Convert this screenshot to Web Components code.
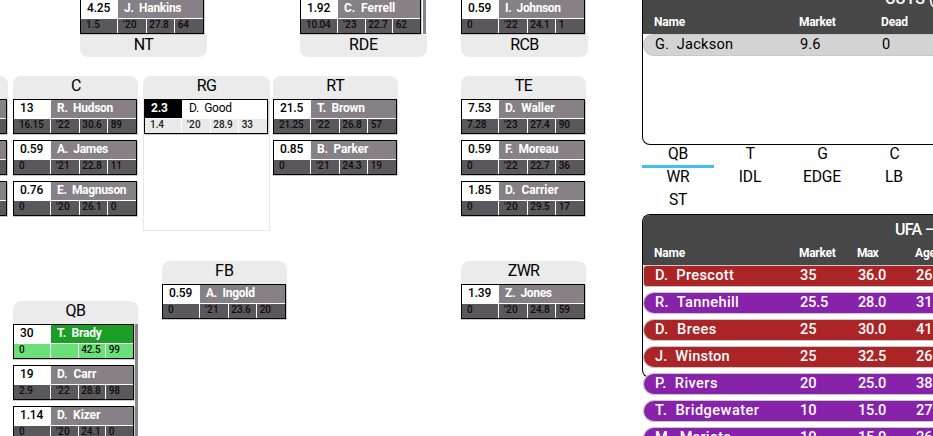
<!DOCTYPE html>
<html lang="en">
<head>
<meta charset="utf-8">
<title>Depth chart</title>
<style>
  html, body { margin: 0; height: 436px; overflow: hidden; background: #fff; }
  body { font-family: Roboto, "Liberation Sans", sans-serif; color: #000; }
</style>
</head>
<body>
<depth-app></depth-app>
<script>
const attach = (host, css, html) => {
  const root = host.attachShadow({ mode: 'open' });
  root.innerHTML = `<style>${css}</style>${html}`;
  return root;
};

// A run of text tracked so that it takes a given width in pixels.
class FitText extends HTMLElement {
  connectedCallback() {
    if (this.shadowRoot) return;
    attach(this, `:host{display:inline-block;white-space:pre}span{display:inline-block}`, `<span><slot></slot></span>`);
    this.fit();
  }
  fit() {
    const text = this.textContent;
    const size = parseFloat(getComputedStyle(this).fontSize);
    let target = parseFloat(this.getAttribute('w'));
    if (!target) {
      const digits = (text.match(/\d/g) || []).length;
      target = digits * size * 0.53 + (text.length - digits) * size * 0.26;
    }
    const natural = this.shadowRoot.querySelector('span').getBoundingClientRect().width;
    if (natural) this.style.letterSpacing = ((target + size * 0.08 - natural) / text.length).toFixed(3) + 'px';
  }
}

const fitted = (text, w = '') => text ? `<fit-text w="${w}">${text}</fit-text>` : '';

class PlayerCard extends HTMLElement {
  connectedCallback() {
    const [value, name, w, cost, year, age, rating] = this.getAttribute('data').split('|');
    attach(this, `
      :host{display:block;box-sizing:border-box;height:35px;border:1px solid #000;background:#fff;box-shadow:0 1px #c9c9c9,1px 1px #d0d0d0;--top:#878187;--low:#5a585c;--ink:#fff;--lowink:#0c0c0c}
      :host([tone=green]){--top:#1a9e26;--low:#6bdf78}
      :host([tone=plain]){--top:#fff;--low:#e9e9e9;--ink:#000;--lowink:#222}
      .top{display:grid;grid-template-columns:37px 1fr;height:18px;line-height:16px;font-size:12px;font-weight:500}
      .top>*{height:18px}
      .v{padding-left:6px;background:#fff}
      :host([tone=plain]) .v{background:#000;color:#fff;font-weight:700}
      .n{padding-left:6px;background:var(--top);color:var(--ink);font-weight:700}
      :host([tone=plain]) .n{font-weight:400;padding-left:7px}
      .low{display:grid;grid-template-columns:36px 28fr 27.5fr 28fr;column-gap:1px;margin-top:1px;height:14px;line-height:12px;font-size:10px;font-weight:500;color:var(--lowink)}
      .low div{background:var(--low);padding-left:2.5px}
      .low div:nth-child(1){padding-left:5px}
      .low div:nth-child(2){padding-left:5px}`,
      `<div class="top"><div class="v">${fitted(value)}</div><div class="n">${fitted(name, w)}</div></div>
       <div class="low">${[cost, year, age, rating].map(t => `<div>${fitted(t)}</div>`).join('')}</div>`);
  }
}

class PositionGroup extends HTMLElement {
  connectedCallback() {
    const label = this.getAttribute('label');
    attach(this, `
      :host{display:flex;flex-direction:column;width:125px;flex:none}
      header{height:23px;line-height:20px;font-size:16px;text-align:center;background:#ebebeb;border-radius:8px 8px 0 0;flex:none}
      .cards{display:flex;flex-direction:column;gap:6px;padding-right:1px}
      :host([foot]){flex-direction:column-reverse;justify-content:flex-end;width:127px}
      :host([foot]) header{height:22px;margin-top:1px;border-radius:0 0 8px 8px}
      :host([foot]) .cards{padding-right:3px}
      :host([scroll]) .cards{padding-right:1px;border-right:3px solid #858585}
      :host([foot][scroll]) .cards{padding-right:2px;margin-right:1px}
      :host([open]){width:127px}
      :host([open]) .cards{box-sizing:border-box;height:132px;border:1px solid #e8e8e8;border-top:0;padding-right:1px}`,
      `<header>${label ? fitted(label, this.getAttribute('w')) : ''}</header><div class="cards"><slot></slot></div>`);
  }
}

class FieldView extends HTMLElement {
  connectedCallback() {
    attach(this, `
      :host{display:block;width:642px;height:436px;overflow:hidden}
      .line{display:flex;align-items:flex-start}
      .a{height:77px;margin-top:-1px;padding-left:80px}
      .b{height:185px;margin-left:-117px}
      .c{height:175px;padding-left:13px}`,
      `<div class="line a">
        <position-group foot label="NT" w="18"><player-card data="4.25|J.  Hankins|56.3|1.5|'20|27.8|64"></player-card></position-group>
        <position-group foot scroll label="RDE" w="27.5" style="margin-left:93px"><player-card data="1.92|C.  Ferrell|50.3|10.04|'23|22.7|62"></player-card></position-group>
        <position-group foot label="RCB" w="27" style="margin-left:34px"><player-card data="0.59|I.  Johnson|54.7|0|'22|24.1|1"></player-card></position-group>
      </div>
      <div class="line b">
        <position-group><player-card data="||||||"></player-card><player-card data="||||||"></player-card><player-card data="||||||"></player-card></position-group>
        <position-group label="C" w="7.6" style="margin-left:5px"><player-card data="13|R.  Hudson|55|16.15|'22|30.6|89"></player-card><player-card data="0.59|A.  James|50|0|'21|22.8|11"></player-card><player-card data="0.76|E.  Magnuson|68.3|0|'20|26.1|0"></player-card></position-group>
        <position-group open label="RG" w="18" style="margin-left:5px"><player-card tone="plain" data="2.3|D.  Good|41.7|1.4|'20|28.9|33"></player-card></position-group>
        <position-group label="RT" w="17" style="margin-left:3px"><player-card data="21.5|T.  Brown|46.7|21.25|'22|26.8|57"></player-card><player-card data="0.85|B.  Parker|50.3|0|'21|24.3|19"></player-card></position-group>
        <position-group label="TE" w="16" style="margin-left:63px"><player-card data="7.53|D.  Waller|48.7|7.28|'23|27.4|90"></player-card><player-card data="0.59|F.  Moreau|52.3|0|'22|22.7|36"></player-card><player-card data="1.85|D.  Carrier|52.3|0|'20|29.5|17"></player-card></position-group>
      </div>
      <div class="line c">
        <position-group scroll label="QB" w="18.5" style="margin-top:40px"><player-card tone="green" data="30|T.  Brady|43.7|0||42.5|99"></player-card><player-card data="19|D.  Carr|38.3|2.9|'22|28.8|98"></player-card><player-card data="1.14|D.  Kizer|42.3|0|'20|24.1|0"></player-card></position-group>
        <position-group label="FB" w="17.5" style="margin-left:24px"><player-card data="0.59|A.  Ingold|47.7|0|'21|23.6|20"></player-card></position-group>
        <position-group label="ZWR" w="30" style="margin-left:174px"><player-card data="1.39|Z.  Jones|45.7|0|'20|24.8|59"></player-card></position-group>
      </div>`);
  }
}

class TableRow extends HTMLElement {
  connectedCallback() {
    const [name, w, ...cells] = this.getAttribute('data').split('|');
    attach(this, `
      :host{display:grid;grid-template-columns:var(--cols);box-sizing:border-box;height:22px;line-height:19px;padding-left:11px;border:1px solid #c8c8c8;border-right:0;border-radius:11px 0 0 11px;font-size:14.6px;background:#d3d3d3;flex:none}
      :host([tone]){color:#fff;font-weight:500}
      :host([tone=red]){background:#ab2526}
      :host([tone=purple]){background:#8822ab}
      :host([first]){border-radius:4px 0 0 4px}`,
      `${fitted(name, w)}${cells.map(c => `<div>${fitted(c)}</div>`).join('')}`);
  }
}

class PlayerPanel extends HTMLElement {
  connectedCallback() {
    attach(this, `
      :host{display:flex;flex-direction:column;box-sizing:border-box;border:1px solid #000;border-right:0;border-radius:8px 0 0 8px;flex:none}
      header{background:#474747;color:#fff;border-radius:7px 0 0 0;height:50px;flex:none;font-weight:500}
      .title{height:30px;line-height:30px;font-size:16px;padding-left:var(--indent);white-space:nowrap}
      .heads{display:grid;grid-template-columns:var(--cols);padding-left:11px;line-height:17px;font-size:12px;font-weight:700}
      .rows{display:flex;flex-direction:column;gap:5px}`,
      `<header><div class="title"><slot name="title"></slot></div><div class="heads"><slot name="head"></slot></div></header><div class="rows"><slot></slot></div>`);
  }
}

class PositionTabs extends HTMLElement {
  connectedCallback() {
    const tabs = [['QB',18.7],['T',7.5],['G',8.5],['C',8],['WR',22],['IDL',21.5],['EDGE',37],['LB',17],['ST',17]];
    attach(this, `
      :host{display:grid;grid-template-columns:repeat(4,72px);grid-auto-rows:23px;height:69px;flex:none}
      div{box-sizing:border-box;text-align:center;font-size:15.6px;line-height:18px;border-bottom:3px solid transparent}
      .on{border-color:#41c0f0}`,
      tabs.map(([t, w], i) => `<div class="${i ? '' : 'on'}">${fitted(t, w)}</div>`).join(''));
  }
}

class DepthApp extends HTMLElement {
  connectedCallback() {
    attach(this, `
      :host{display:flex;width:933px;height:436px;overflow:hidden}
      aside{display:flex;flex-direction:column;width:291px;flex:none}
      .cuts{--cols:145px 82px 50px;--indent:242px;height:162px;margin-top:-17px}
      .ufa{--cols:145px 58px 58px 18px;--indent:252px;height:164px}`,
      `<field-view></field-view>
      <aside>
        <player-panel class="cuts">
          <fit-text slot="title" w="48">CUTS (</fit-text>
          <fit-text slot="head" w="30">Name</fit-text><fit-text slot="head" w="35.5">Market</fit-text><fit-text slot="head" w="26">Dead</fit-text>
          <table-row data="G.  Jackson|77|9.6|0"></table-row>
        </player-panel>
        <position-tabs></position-tabs>
        <player-panel class="ufa">
          <fit-text slot="title" w="38">UFA –</fit-text>
          <fit-text slot="head" w="30">Name</fit-text><fit-text slot="head" w="35.5">Market</fit-text><fit-text slot="head" w="20">Max</fit-text><fit-text slot="head" w="20">Age</fit-text>
          <table-row first tone="red" data="D.  Prescott|78|35|36.0|26"></table-row>
          <table-row tone="purple" data="R.  Tannehill|83|25.5|28.0|31"></table-row>
          <table-row tone="red" data="D.  Brees|60.7|25|30.0|41"></table-row>
          <table-row tone="red" data="J.  Winston|73.7|25|32.5|26"></table-row>
          <table-row tone="purple" data="P.  Rivers|61.7|20|25.0|38"></table-row>
          <table-row tone="purple" data="T.  Bridgewater|103.3|10|15.0|27"></table-row>
          <table-row tone="purple" data="M.  Mariota|75|10|15.0|26"></table-row>
        </player-panel>
      </aside>`);
  }
}

customElements.define('player-card', PlayerCard);
customElements.define('position-group', PositionGroup);
customElements.define('field-view', FieldView);
customElements.define('table-row', TableRow);
customElements.define('player-panel', PlayerPanel);
customElements.define('position-tabs', PositionTabs);
customElements.define('depth-app', DepthApp);
customElements.define('fit-text', FitText);
</script>
</body>
</html>
